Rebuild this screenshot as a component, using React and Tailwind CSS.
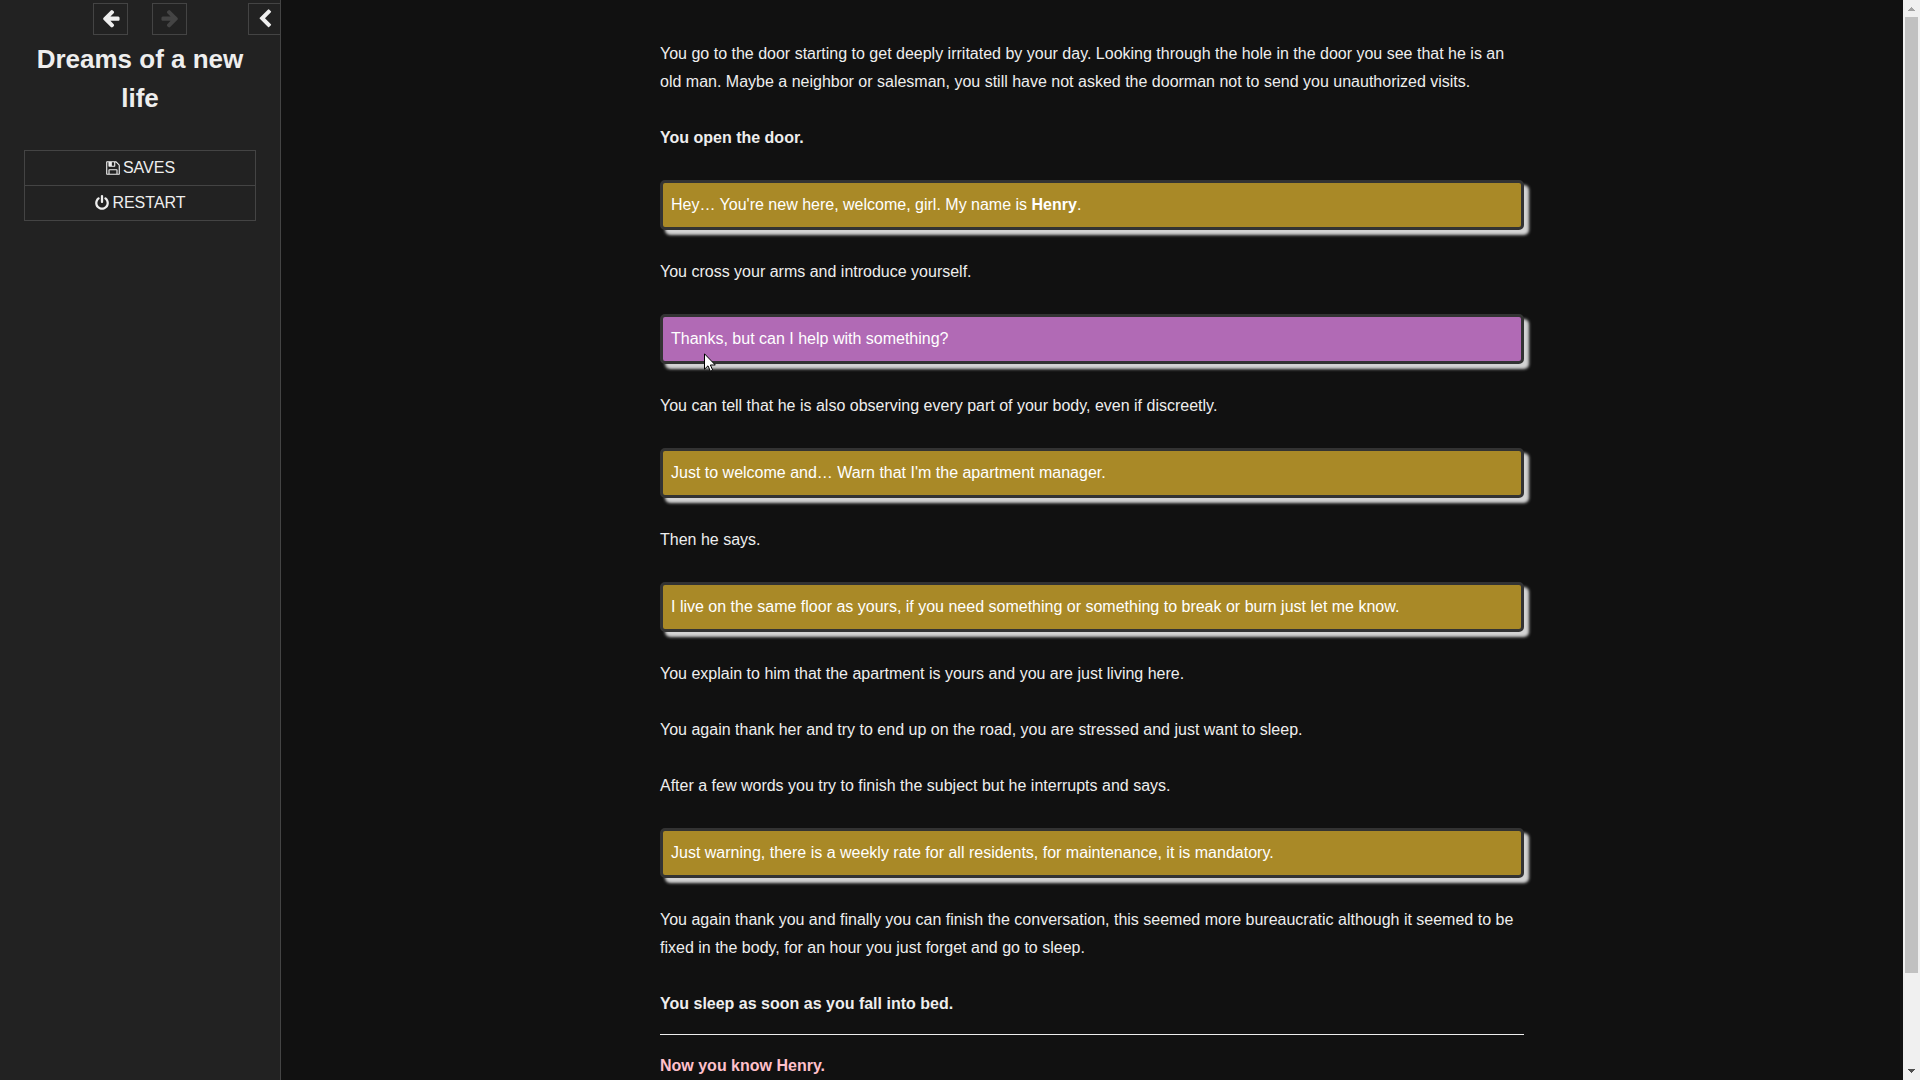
import React from 'react';

const ICONS = {
  left: 'M1664 896v128q0 53-32.5 90.5t-84.5 37.5h-704l293 294q38 36 38 90t-38 90l-75 76q-37 37-90 37-52 0-91-37l-651-652q-37-37-37-90 0-52 37-91l651-650q38-38 91-38 52 0 90 38l75 74q38 38 38 91t-38 91l-293 293h704q52 0 84.5 37.5t32.5 90.5z',
  right: 'M1600 960q0 54-37 91l-651 651q-39 37-91 37-51 0-90-37l-75-75q-38-38-38-91t38-91l293-293h-704q-52 0-84.5-37.5t-32.5-90.5v-128q0-53 32.5-90.5t84.5-37.5h704l-293-294q-38-36-38-90t38-90l75-75q38-38 90-38 53 0 91 38l651 651q37 35 37 90z',
  chevron: 'M1427 301l-531 531 531 531q19 19 19 45t-19 45l-166 166q-19 19-45 19t-45-19l-742-742q-19-19-19-45t19-45l742-742q19-19 45-19t45 19l166 166q19 19 19 45t-19 45z',
  save: 'M512 1536h768v-384h-768v384zm896 0h128v-896q0-14-10-38.5t-20-34.5l-281-281q-10-10-34-20t-39-10v416q0 40-28 68t-68 28h-576q-40 0-68-28t-28-68v-416h-128v1280h128v-416q0-40 28-68t68-28h832q40 0 68 28t28 68v416zm-384-928v-320q0-13-9.5-22.5t-22.5-9.5h-192q-13 0-22.5 9.5t-9.5 22.5v320q0 13 9.5 22.5t22.5 9.5h192q13 0 22.5-9.5t9.5-22.5zm640 32v928q0 40-28 68t-68 28h-1344q-40 0-68-28t-28-68v-1344q0-40 28-68t68-28h928q40 0 88 20t76 48l280 280q28 28 48 76t20 88z',
  power: 'M1664 896q0 156-61 298t-164 245-245 164-298 61-298-61-245-164-164-245-61-298q0-182 80.5-343t226.5-270q43-32 95.5-25t83.5 50q32 42 24.5 94.5t-49.5 84.5q-98 74-151.5 181t-53.5 228q0 104 40.5 198.5t109.5 163.5 163.5 109.5 198.5 40.5 198.5-40.5 163.5-109.5 109.5-163.5 40.5-198.5q0-121-53.5-228t-151.5-181q-42-32-49.5-84.5t24.5-94.5q31-43 84-50t95 25q146 109 226.5 270t80.5 343zm-640-768v640q0 52-38 90t-90 38-90-38-38-90v-640q0-52 38-90t90-38 90 38 38 90z',
};

function Icon({ name, className }) {
  return (
    <svg viewBox="0 0 1792 1792" fill="currentColor" aria-hidden="true" className={`shrink-0 overflow-visible ${className}`}>
      <path d={ICONS[name]} />
    </svg>
  );
}

function Sidebar() {
  return (
    <aside className="flex w-[281px] shrink-0 flex-col border-r border-[#444] bg-[#222] text-center">
      <div className="grid grid-cols-[1fr_auto_1fr] pt-[3px]">
        <div className="col-start-2 flex gap-6">
          <button type="button" aria-label="Go backward" className="flex h-8 w-[35px] items-center justify-center border border-[#444] pb-[3px]">
            <Icon name="left" className="size-5" />
          </button>
          <button type="button" disabled aria-label="Go forward" className="flex h-8 w-[35px] items-center justify-center border border-[#444] pb-[3px] text-[#444]">
            <Icon name="right" className="size-5" />
          </button>
        </div>
        <button type="button" aria-label="Toggle the sidebar" className="flex h-8 w-8 items-center justify-center justify-self-end border border-r-0 border-[#444]">
          <Icon name="chevron" className="size-5" />
        </button>
      </div>
      <h1 className="mt-[5px] px-6 text-[26px] leading-[39px] font-bold">Dreams of a new life</h1>
      <nav className="mx-6 mt-8 divide-y divide-[#444] border border-[#444]">
        <button type="button" className="flex h-[35px] w-full items-center justify-center gap-0.5">
          <Icon name="save" className="size-4" />
          SAVES
        </button>
        <button type="button" className="flex h-[34px] w-full items-center justify-center gap-0.5">
          <Icon name="power" className="size-4" />
          RESTART
        </button>
      </nav>
    </aside>
  );
}

function Speech({ own, children }) {
  return (
    <div className={`relative rounded-[5px] border-3 border-[#333] p-2 text-white shadow-[5px_5px_3px_#d3d3d3] ${own ? 'bg-[#b16ab5]' : 'bg-[#a98927]'}`}>
      {children}
    </div>
  );
}

function Pointer() {
  return (
    <svg viewBox="0 0 12 19" aria-hidden="true" className="pointer-events-none absolute top-9 left-[41px] h-[19px] w-3">
      <path d="M.5 .8V16.2L4 12.8l2.4 5.4 2.3-1-2.3-5.2h4.9z" fill="#fff" stroke="#000" />
    </svg>
  );
}

function ScrollRail() {
  return (
    <div className="flex w-[17px] shrink-0 flex-col items-center bg-[#f0f0f0]" aria-hidden="true">
      <svg viewBox="0 0 17 17" className="size-[17px]" fill="#a3a3a3" shapeRendering="crispEdges">
        <path d="M5 11V10H6V9H7V8H8V7H9V8H10V9H11V10H12V11z" />
      </svg>
      <div className="w-full flex-1 px-0.5">
        <div className="h-[91.4%] bg-[#c1c1c1]" />
      </div>
      <svg viewBox="0 0 17 17" className="size-[17px]" fill="#505050" shapeRendering="crispEdges">
        <path d="M5 6V7H6V8H7V9H8V10H9V9H10V8H11V7H12V6z" />
      </svg>
    </div>
  );
}

export default function App() {
  return (
    <div className="flex h-screen overflow-hidden bg-[#111] font-['Liberation_Sans',Arial,sans-serif] text-base text-[#eee]">
      <Sidebar />
      <main className="min-w-0 flex-1 overflow-hidden px-12 pt-10">
        <article className="mx-auto flex max-w-[864px] flex-col gap-7 leading-7">
          <p>
            You go to the door starting to get deeply irritated by your day. Looking through the hole in the door you see that he is an
            old man. Maybe a neighbor or salesman, you still have not asked the doorman not to send you unauthorized visits.
          </p>
          <p className="font-bold">You open the door.</p>
          <Speech>
            Hey… You're new here, welcome, girl. My name is <b>Henry</b>.
          </Speech>
          <p>You cross your arms and introduce yourself.</p>
          <Speech own>
            Thanks, but can I help with something?
            <Pointer />
          </Speech>
          <p>You can tell that he is also observing every part of your body, even if discreetly.</p>
          <Speech>Just to welcome and… Warn that I'm the apartment manager.</Speech>
          <p>Then he says.</p>
          <Speech>I live on the same floor as yours, if you need something or something to break or burn just let me know.</Speech>
          <p>You explain to him that the apartment is yours and you are just living here.</p>
          <p>You again thank her and try to end up on the road, you are stressed and just want to sleep.</p>
          <p>After a few words you try to finish the subject but he interrupts and says.</p>
          <Speech>Just warning, there is a weekly rate for all residents, for maintenance, it is mandatory.</Speech>
          <p>
            You again thank you and finally you can finish the conversation, this seemed more bureaucratic although it seemed to be
            fixed in the body, for an hour you just forget and go to sleep.
          </p>
          <div className="font-bold">
            <p>You sleep as soon as you fall into bed.</p>
            <hr className="mt-4 mb-[17px] border-[#eee]" />
            <p className="text-[#ffc0cb]">Now you know Henry.</p>
          </div>
        </article>
      </main>
      <ScrollRail />
    </div>
  );
}
